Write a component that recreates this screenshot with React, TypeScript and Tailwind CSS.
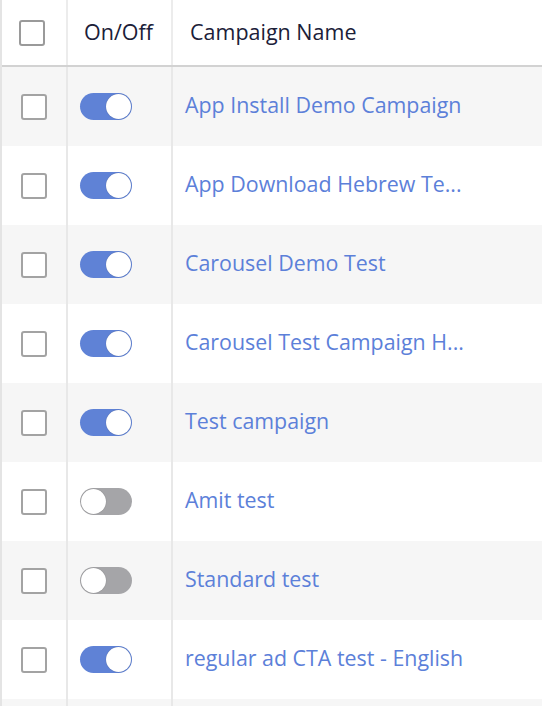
import { useState } from 'react';

type Campaign = { name: string; on: boolean };

const campaigns: Campaign[] = [
  { name: 'App Install Demo Campaign', on: true },
  { name: 'App Download Hebrew Te...', on: true },
  { name: 'Carousel Demo Test', on: true },
  { name: 'Carousel Test Campaign H...', on: true },
  { name: 'Test campaign', on: true },
  { name: 'Amit test', on: false },
  { name: 'Standard test', on: false },
  { name: 'regular ad CTA test - English', on: true },
];

function Checkbox({ header = false }: { header?: boolean }) {
  return (
    <div
      className={`w-[26px] h-[26px] rounded-[3px] bg-white border-2 ${header ? 'border-[#9a9a9a]' : 'border-[#a3a3a3]'}`}
    />
  );
}

function Toggle({ on }: { on: boolean }) {
  return (
    <div
      className={`w-[52px] h-[27px] rounded-full flex items-center px-[1px] ${on ? 'bg-[#5f82d6] justify-end' : 'bg-[#a5a5a8] justify-start'}`}
    >
      <div className="w-[25px] h-[25px] rounded-full bg-white shadow-[0_0_1px_rgba(0,0,0,0.35)]" />
    </div>
  );
}

export default function App() {
  const [rows] = useState(campaigns);

  return (
    <div className="w-[542px] h-[706px] overflow-hidden bg-white font-['Open_Sans',sans-serif]">
      <div className="border-l-2 border-[#e4e4e4]">
        {/* Header */}
        <div className="grid grid-cols-[66px_105px_1fr] h-[67px] border-b-2 border-[#d2d2d2]">
          <div className="flex items-center pl-[17px] border-r-2 border-[#ececec]">
            <Checkbox header />
          </div>
          <div className="flex items-center pl-[16px] border-r-2 border-[#ececec] text-[21.5px] text-[#1b2038]">
            On/Off
          </div>
          <div className="flex items-center pl-[17px] text-[21.5px] text-[#1b2038]">Campaign Name</div>
        </div>

        {/* Rows */}
        {rows.map((c, i) => (
          <div
            key={c.name}
            className={`grid grid-cols-[66px_105px_1fr] h-[79px] ${i % 2 === 0 ? 'bg-[#f6f6f6]' : 'bg-white'}`}
          >
            <div className="flex items-center pl-[19px] border-r-2 border-[#e8e8e8]">
              <Checkbox />
            </div>
            <div className="flex items-center pl-[12px] border-r-2 border-[#e8e8e8]">
              <Toggle on={c.on} />
            </div>
            <div className="flex items-center pl-[12px] pb-[2px] text-[21.4px] text-[#5c80d9] whitespace-nowrap">
              {c.name}
            </div>
          </div>
        ))}
        <div className="h-[20px] bg-[#f6f6f6] grid grid-cols-[66px_105px_1fr]">
          <div className="border-r-2 border-[#e8e8e8]" />
          <div className="border-r-2 border-[#e8e8e8]" />
          <div />
        </div>
      </div>
    </div>
  );
}
